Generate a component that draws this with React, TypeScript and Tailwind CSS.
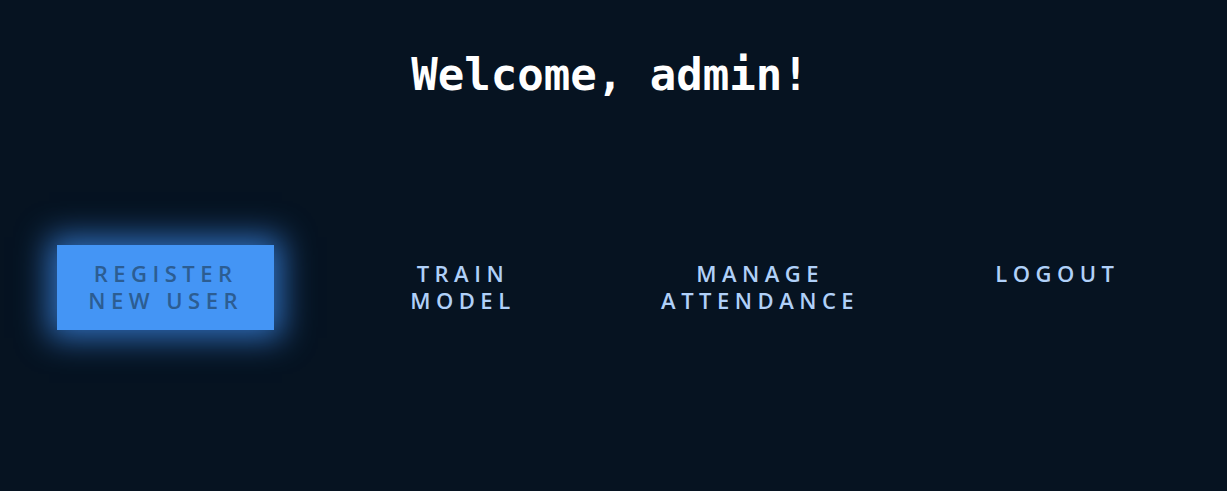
const items = ["Register New User", "Train Model", "Manage Attendance", "Logout"];

export default function App() {
  return (
    <div className="min-h-[491px] w-full bg-[#061321] pt-[50px]">
      <h1 className="pr-[7px] text-center font-['DejaVu_Sans_Mono',monospace] text-[44px] font-bold leading-[50px] text-white">
        Welcome, admin!
      </h1>

      <div className="mt-[145px] grid grid-cols-4 pl-[17px] pr-[21px]">
        {items.map((label, i) => (
          <div key={label} className="flex justify-center">
            <button
              className={
                i === 0
                  ? "flex h-[85px] w-[217px] items-start justify-center bg-[#4495f5] pt-[15px] text-center font-['Open_Sans',sans-serif] text-[22px] font-semibold uppercase leading-[27px] tracking-[0.25em] text-[#2c5d92] shadow-[0_0_30px_8px_rgba(66,150,255,0.7)]"
                  : "flex h-[85px] w-[217px] items-start justify-center pt-[15px] text-center font-['Open_Sans',sans-serif] text-[22px] font-semibold uppercase leading-[27px] tracking-[0.25em] text-[#b0d0f8]"
              }
            >
              <span className="w-[200px]">{label}</span>
            </button>
          </div>
        ))}
      </div>
    </div>
  );
}
